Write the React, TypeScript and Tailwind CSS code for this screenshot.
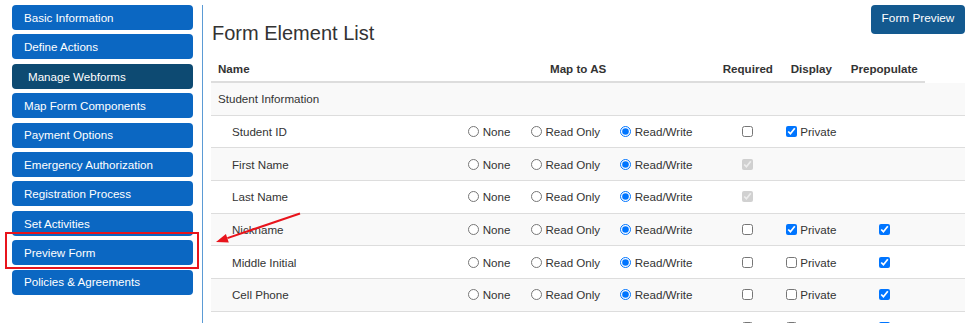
import React from "react";

const navItems = [
  "Basic Information",
  "Define Actions",
  "Manage Webforms",
  "Map Form Components",
  "Payment Options",
  "Emergency Authorization",
  "Registration Process",
  "Set Activities",
  "Preview Form",
  "Policies & Agreements",
];

type Row = {
  name: string;
  required: "off" | "lock";
  display: "none" | "on" | "off";
  prepop: boolean;
  partial?: boolean;
};

const rows: Row[] = [
  { name: "Student ID", required: "off", display: "on", prepop: false },
  { name: "First Name", required: "lock", display: "none", prepop: false },
  { name: "Last Name", required: "lock", display: "none", prepop: false },
  { name: "Nickname", required: "off", display: "on", prepop: true },
  { name: "Middle Initial", required: "off", display: "off", prepop: true },
  { name: "Cell Phone", required: "off", display: "off", prepop: true },
  { name: "", required: "off", display: "off", prepop: true, partial: true },
];

function Radio({ group, label, checked, width }: { group: string; label: string; checked?: boolean; width: string }) {
  return (
    <label className={`flex items-center gap-[3.7px] ${width}`}>
      <input type="radio" name={group} defaultChecked={checked} className="m-0 w-[11px] h-[11px]" />
      <span>{label}</span>
    </label>
  );
}

export default function App() {
  return (
    <div
      className="relative w-[975px] h-[323px] overflow-hidden bg-white text-[#333] text-[11.6px]"
      style={{ fontFamily: '"Liberation Sans", Arial, sans-serif' }}
    >
      <div className="flex">
        {/* sidebar */}
        <div className="mt-[5px] w-[203px] h-[318px] border-r-[1.5px] border-[#5b9bd5] shrink-0">
          <div className="flex flex-col gap-[4.4px] pl-[12px]">
            {navItems.map((item) => {
              const active = item === "Manage Webforms";
              return (
                <div
                  key={item}
                  className={`w-[181px] h-[25px] flex items-center rounded-[4px] text-white ${
                    active ? "bg-[#0d4a72] pl-[16px]" : "bg-[#0b67c2] pl-[12px]"
                  }`}
                >
                  {item}
                </div>
              );
            })}
          </div>
        </div>

        {/* main */}
        <div className="flex-1 pt-[5px] pl-[8px] pr-[10px]">
          <div className="flex justify-between items-start">
            <h2 className="mt-[16.5px] ml-[1px] text-[20px] leading-[23px] font-normal">Form Element List</h2>
            <div className="w-[94px] h-[28.5px] flex items-center justify-center rounded-[4px] bg-[#13598f] text-white text-[11.8px]">
              Form Preview
            </div>
          </div>

          <div className="mt-[11.5px]">
            <div className="w-[714px] h-[27px] flex items-center border-b-2 border-[#ddd] font-bold">
              <div className="w-[339px] pl-[7px]">Name</div>
              <div className="w-[172.7px]">Map to AS</div>
              <div className="w-[68px]">Required</div>
              <div className="w-[60px]">Display</div>
              <div>Prepopulate</div>
            </div>

            <div className="w-[754px] h-[32.7px] flex items-center border-b border-[#ddd] bg-[#f9f9f9] pl-[7px]">
              Student Information
            </div>

            {rows.map((r, i) => (
              <div
                key={i}
                className={`w-[754px] h-[32.7px] flex items-center border-b border-[#ddd] ${
                  i % 2 === 1 ? "bg-[#f9f9f9]" : "bg-white"
                }`}
              >
                <div className="w-[257px] pl-[21px]">{r.name}</div>
                {r.partial ? (
                  <div className="w-[273.7px]" />
                ) : (
                  <>
                    <Radio group={`map-${i}`} label="None" width="w-[62.7px]" />
                    <Radio group={`map-${i}`} label="Read Only" width="w-[89.3px]" />
                    <Radio group={`map-${i}`} label="Read/Write" width="w-[121.7px]" checked />
                  </>
                )}
                <div className="w-[44.3px] flex items-center">
                  {r.required === "lock" ? (
                    <input type="checkbox" disabled defaultChecked className="m-0 w-[11px] h-[11px]" />
                  ) : (
                    <input type="checkbox" className="m-0 w-[11px] h-[11px]" />
                  )}
                </div>
                <div className="w-[93px] flex items-center gap-[3.3px]">
                  {r.display !== "none" && (
                    <>
                      <input type="checkbox" defaultChecked={r.display === "on"} className="m-0 w-[11px] h-[11px]" />
                      {!r.partial && <span>Private</span>}
                    </>
                  )}
                </div>
                <div className="flex items-center">
                  {r.prepop && <input type="checkbox" defaultChecked className="m-0 w-[11px] h-[11px]" />}
                </div>
              </div>
            ))}
          </div>
        </div>
      </div>

      {/* annotation: red box around Preview Form */}
      <div className="absolute left-[5px] top-[232px] w-[194px] h-[37px] border-2 border-[#e8141c] pointer-events-none" />

      {/* annotation: red arrow */}
      <svg className="absolute left-0 top-0 pointer-events-none" width="975" height="323">
        <line x1="300" y1="213.5" x2="227.4" y2="238.1" stroke="#e8141c" strokeWidth="2" />
        <polygon points="216,242 228.8,242.4 225.9,233.9" fill="#e8141c" />
      </svg>
    </div>
  );
}
